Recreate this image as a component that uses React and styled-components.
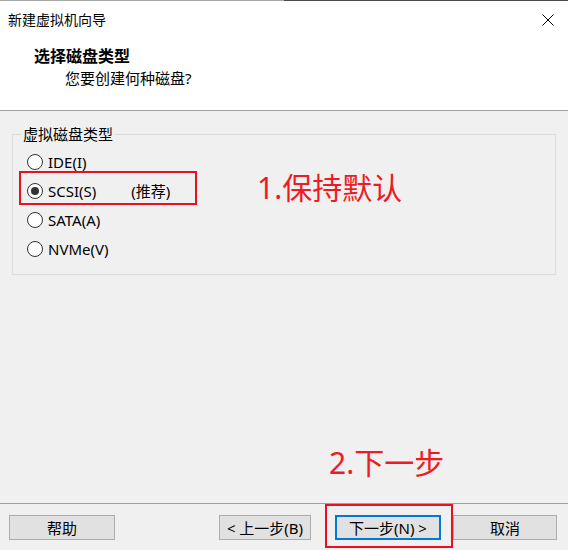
import React, { useState } from "react";
import styled, { createGlobalStyle } from "styled-components";

const GlobalStyle = createGlobalStyle`
  html, body {
    margin: 0;
    padding: 0;
    background: #f0f0f0;
  }
  body {
    font-family: "Segoe UI", "Noto Sans", "Microsoft YaHei", "Noto Sans CJK SC", sans-serif;
    color: #000;
  }
`;

const options = [
  { id: "ide", label: "IDE(I)" },
  { id: "scsi", label: "SCSI(S)", hint: "(推荐)" },
  { id: "sata", label: "SATA(A)" },
  { id: "nvme", label: "NVMe(V)" },
];

function App() {
  const [disk, setDisk] = useState("scsi");

  return (
    <Window>
      <GlobalStyle />
      <Header>
        <TitleBar>
          <span>新建虚拟机向导</span>
          <CloseButton aria-label="关闭">
            <svg width="12" height="12" viewBox="0 0 12 12">
              <path d="M0.5 0.5 L11.5 11.5 M11.5 0.5 L0.5 11.5" stroke="#000" strokeWidth="1" />
            </svg>
          </CloseButton>
        </TitleBar>
        <Heading>选择磁盘类型</Heading>
        <SubHeading>您要创建何种磁盘?</SubHeading>
      </Header>

      <Body>
        <GroupBox>
          <Legend>虚拟磁盘类型</Legend>
          {options.map((opt) => (
            <Row key={opt.id} onClick={() => setDisk(opt.id)}>
              <Radio checked={disk === opt.id} />
              <Label>{opt.label}</Label>
              {opt.hint && <Hint>{opt.hint}</Hint>}
              {opt.id === "scsi" && (
                <>
                  <Highlight />
                  <Note $left={230} $top={-6}>1.保持默认</Note>
                </>
              )}
            </Row>
          ))}
        </GroupBox>
      </Body>

      <Footer>
        <Button $width={106}>帮助</Button>
        <Spacer />
        <Button $width={92}>&lt; 上一步(B)</Button>
        <NextWrap>
          <Note $left={-6} $top={-70}>2.下一步</Note>
          <Highlight $footer />
          <Button $width={106} $primary>下一步(N) &gt;</Button>
        </NextWrap>
        <Button $width={104} style={{ marginLeft: 12 }}>取消</Button>
      </Footer>
    </Window>
  );
}

const Window = styled.div`
  width: 568px;
  height: 550px;
  display: flex;
  flex-direction: column;
  background: #f0f0f0;
  overflow: hidden;
`;

const Header = styled.div`
  height: 110px;
  background: linear-gradient(to right, #a8a8a8 50%, #4a4a4a 50%) top / 100% 1px no-repeat, #fff;
  border-bottom: 1px solid #a0a0a0;
`;

const TitleBar = styled.div`
  height: 38px;
  display: flex;
  align-items: center;
  justify-content: space-between;
  padding: 1px 14px 0 8px;
  box-sizing: border-box;
  font-size: 14px;
  line-height: 20px;
`;

const CloseButton = styled.div`
  width: 12px;
  height: 12px;
  display: flex;
`;

const Heading = styled.div`
  margin-top: 8px;
  padding-left: 34px;
  font-size: 16px;
  font-weight: bold;
  line-height: 20px;
`;

const SubHeading = styled.div`
  margin-top: 2px;
  padding-left: 65px;
  font-size: 15px;
  line-height: 20px;
`;

const Body = styled.div`
  flex: 1;
  padding-top: 13px;
`;

const GroupBox = styled.fieldset`
  margin: 0 12px;
  padding: 3px 0 11px 0;
  border: 1px solid #dcdcdc;
  min-width: 0;
`;

const Legend = styled.legend`
  margin-left: 8px;
  padding: 0 2px;
  font-size: 15px;
  line-height: 20px;
`;

const Row = styled.div`
  position: relative;
  height: 29px;
  margin-left: 14px;
  display: flex;
  align-items: center;
  font-size: 15px;
  line-height: 20px;
  cursor: default;
`;

const Radio = styled.span`
  position: relative;
  box-sizing: border-box;
  width: 16px;
  height: 16px;
  border: 1px solid #333;
  border-radius: 50%;
  background: #fff;
  flex-shrink: 0;
  &::after {
    content: "";
    position: absolute;
    left: 3px;
    top: 3px;
    width: 8px;
    height: 8px;
    border-radius: 50%;
    background: #333;
    display: ${(p) => (p.checked ? "block" : "none")};
  }
`;

const Label = styled.span`
  margin-left: 5px;
`;

const Hint = styled.span`
  margin-left: 35px;
`;

const Highlight = styled.div`
  position: absolute;
  box-sizing: border-box;
  border: 2px solid #e81123;
  left: ${(p) => (p.$footer ? "-10px" : "-8px")};
  top: ${(p) => (p.$footer ? "-11px" : "-5px")};
  width: ${(p) => (p.$footer ? "128px" : "178px")};
  height: ${(p) => (p.$footer ? "44px" : "34px")};
  pointer-events: none;
`;

const Note = styled.div`
  position: absolute;
  left: ${(p) => p.$left}px;
  top: ${(p) => p.$top}px;
  font-size: 30px;
  line-height: 36px;
  color: #ed1c24;
  white-space: nowrap;
`;

const Footer = styled.div`
  height: 47px;
  border-top: 1px solid #a0a0a0;
  display: flex;
  align-items: flex-start;
  padding: 11px 11px 0 9px;
  box-sizing: border-box;
`;

const Spacer = styled.div`
  flex: 1;
`;

const NextWrap = styled.div`
  position: relative;
  margin-left: 24px;
  display: flex;
`;

const Button = styled.button`
  width: ${(p) => p.$width}px;
  height: 25px;
  box-sizing: border-box;
  margin: 0;
  padding: 0;
  background: #e1e1e1;
  border: ${(p) => (p.$primary ? "2px solid #0078d7" : "1px solid #adadad")};
  font-family: inherit;
  font-size: 15px;
  line-height: 20px;
  color: #000;
  &:hover {
    background: #e5f1fb;
  }
`;

export default App;
